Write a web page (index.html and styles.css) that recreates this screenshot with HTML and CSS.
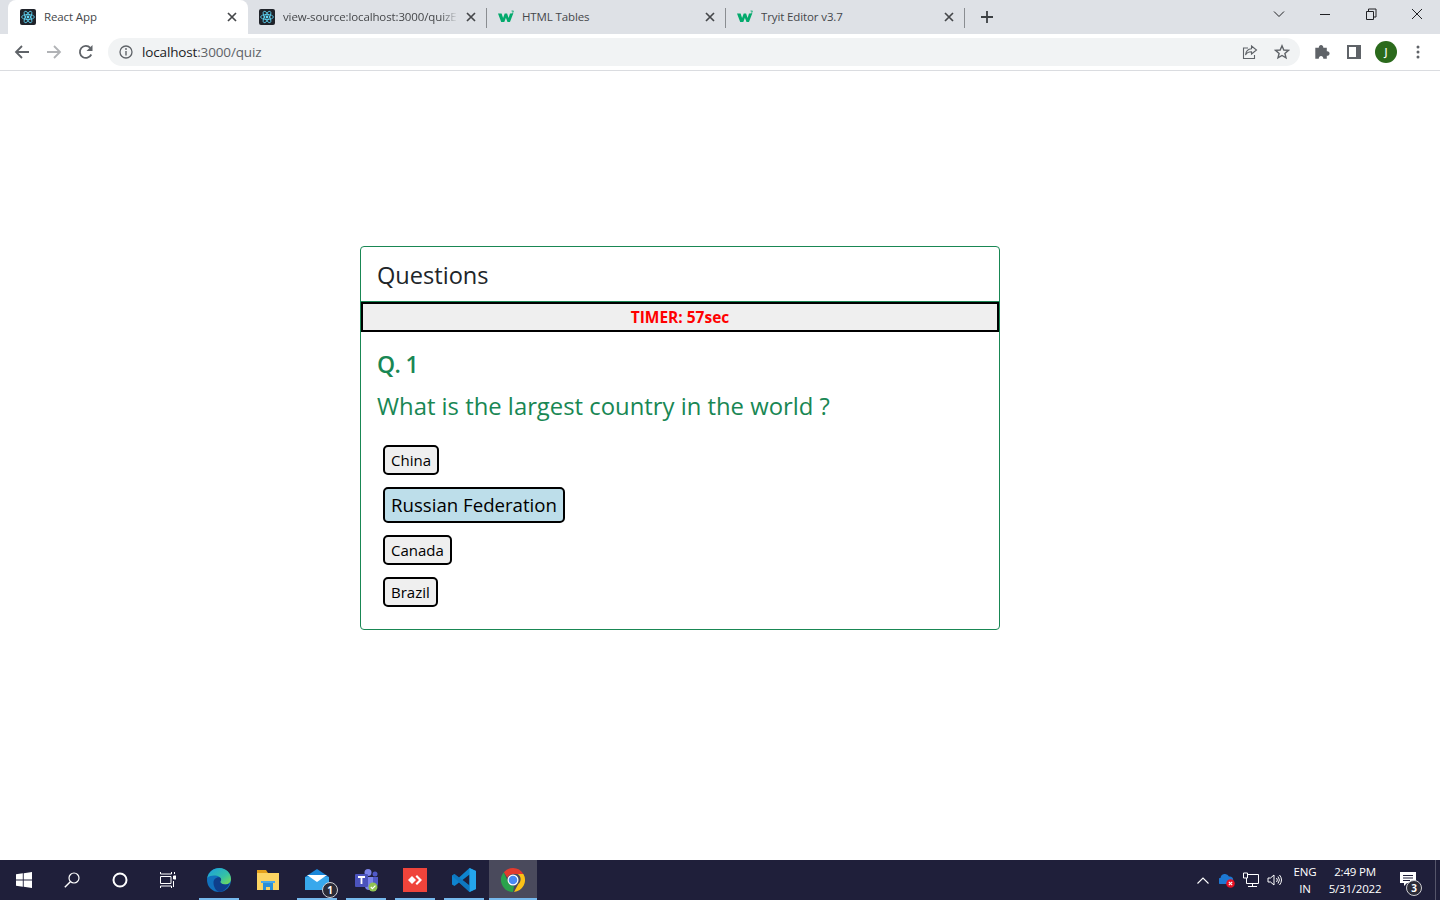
FILE: index.html
```html
<!DOCTYPE html>
<html lang="en">
<head>
<meta charset="utf-8">
<title>React App</title>
<link rel="stylesheet" href="styles.css">
</head>
<body>
<svg class="defs" width="0" height="0" aria-hidden="true">
  <defs>
    <symbol id="react" viewBox="0 0 16 16">
      <rect width="16" height="16" rx="2" fill="#20232a"/>
      <g fill="none" stroke="#61dafb" stroke-width=".8">
        <ellipse cx="8" cy="8" rx="6.4" ry="2.5"/>
        <ellipse cx="8" cy="8" rx="6.4" ry="2.5" transform="rotate(60 8 8)"/>
        <ellipse cx="8" cy="8" rx="6.4" ry="2.5" transform="rotate(120 8 8)"/>
      </g>
      <circle cx="8" cy="8" r="1.4" fill="#61dafb"/>
    </symbol>
    <symbol id="w3" viewBox="0 0 16 16">
      <path d="M0 4.500h3.600l1.500 4.500 1.600-4.500h2.400l1.500 4.500 1.400-4.500h3.200l-3.200 8.500H9.500L7.900 8.700 6.300 13H3.200z" fill="#04aa6d"/>
      <path d="M13.500 2h2l-.9 1.200c.8.200.8 1.700-1 1.700" fill="none" stroke="#04aa6d" stroke-width=".8"/>
    </symbol>
    <symbol id="x" viewBox="0 0 10 10">
      <path d="M1 1l8 8M9 1l-8 8" stroke="#45474a" stroke-width="1.700" fill="none"/>
    </symbol>
    <linearGradient id="edge-top" x1="0" y1="0" x2="1" y2="1">
      <stop offset="0" stop-color="#1b9de2"/>
      <stop offset=".6" stop-color="#35c1a5"/>
      <stop offset="1" stop-color="#7fe04c"/>
    </linearGradient>
  </defs>
</svg>

<header class="chrome">
  <div class="tabstrip">
    <div class="tab tab-active">
      <svg class="favicon"><use href="#react"/></svg>
      <span class="tab-title">React App</span>
      <svg class="tab-close"><use href="#x"/></svg>
    </div>
    <div class="tab tab-sep">
      <svg class="favicon"><use href="#react"/></svg>
      <span class="tab-title tab-fade">view-source:localhost:3000/quizE</span>
      <svg class="tab-close"><use href="#x"/></svg>
    </div>
    <div class="tab tab-sep">
      <svg class="favicon"><use href="#w3"/></svg>
      <span class="tab-title">HTML Tables</span>
      <svg class="tab-close"><use href="#x"/></svg>
    </div>
    <div class="tab tab-sep">
      <svg class="favicon"><use href="#w3"/></svg>
      <span class="tab-title">Tryit Editor v3.7</span>
      <svg class="tab-close"><use href="#x"/></svg>
    </div>
    <svg class="newtab" viewBox="0 0 12 12"><path d="M6 0v12M0 6h12" stroke="#3c4043" stroke-width="1.800"/></svg>
    <div class="winctl">
      <svg class="win-chevron" viewBox="0 0 12 12"><path d="M1 3.500l5 5 5-5" fill="none" stroke="#202124" stroke-width="1"/></svg>
      <svg class="win-btn" viewBox="0 0 46 12"><path d="M18 6.500h10" stroke="#202124" stroke-width="1"/></svg>
      <svg class="win-btn" viewBox="0 0 46 12"><path d="M18.500 3.500h7v8h-7zM20.500 3.500v-2.500h7.500v8h-2.500" fill="none" stroke="#202124" stroke-width="1"/></svg>
      <svg class="win-btn" viewBox="0 0 46 12"><path d="M18 1l10 10M28 1l-10 10" stroke="#202124" stroke-width="1"/></svg>
    </div>
  </div>
  <div class="toolbar">
    <svg class="tool-icon" viewBox="0 0 16 16"><path d="M15 8H2.500M8 2L2 8l6 6" fill="none" stroke="#5f6368" stroke-width="1.800"/></svg>
    <svg class="tool-icon" viewBox="0 0 16 16"><path d="M1 8h12.500M8 2l6 6-6 6" fill="none" stroke="#b1b3b6" stroke-width="1.800"/></svg>
    <svg class="tool-icon" viewBox="0 0 16 16"><path d="M13.300 10.500A6 6 0 1 1 12.300 3.800" fill="none" stroke="#5f6368" stroke-width="1.800"/><path d="M14.500 1v6h-6z" fill="#5f6368"/></svg>
    <div class="omnibox">
      <svg class="omni-info" viewBox="0 0 14 14"><circle cx="7" cy="7" r="6" fill="none" stroke="#5f6368" stroke-width="1.300"/><path d="M7 6v4.500" stroke="#5f6368" stroke-width="1.400"/><circle cx="7" cy="4" r=".9" fill="#5f6368"/></svg>
      <span class="url"><span class="url-host">localhost</span>:3000/quiz</span>
      <svg class="omni-share" viewBox="0 0 16 16"><path d="M9.500 2l5 4-5 4V7.700c-3 0-5 1-6 3.300.3-3.500 2.500-6 6-6.300z" fill="none" stroke="#5f6368" stroke-width="1.100"/><path d="M6 4H1.500v10.500h11V11" fill="none" stroke="#5f6368" stroke-width="1.100"/></svg>
      <svg class="omni-star" viewBox="0 0 16 16"><path d="M8 1.800l1.800 4.200 4.600.4-3.500 3 1.100 4.500L8 11.500l-4 2.400 1.100-4.500-3.500-3 4.600-.4z" fill="none" stroke="#5f6368" stroke-width="1.400"/></svg>
    </div>
    <svg class="ext-icon" viewBox="0 0 16 16"><path d="M.5 5H4a2.300 2.300 0 1 1 4.500 0H12v3.500a2.300 2.300 0 1 1 0 4.500V16H8.500a2.300 2.300 0 1 0-4.500 0H.5z" fill="#5f6368" transform="translate(.8 -1.200)"/></svg>
    <svg class="ext-icon" viewBox="0 0 16 16"><path d="M1 1h14v14H1z" fill="#5f6368"/><path d="M3 3h7v10H3z" fill="#fff"/></svg>
    <div class="avatar">J</div>
    <svg class="ext-icon" viewBox="0 0 16 16"><circle cx="8" cy="3" r="1.500" fill="#5f6368"/><circle cx="8" cy="8" r="1.500" fill="#5f6368"/><circle cx="8" cy="13" r="1.500" fill="#5f6368"/></svg>
  </div>
</header>

<main class="page">
  <section class="card">
    <div class="card-header">Questions</div>
    <div class="timer">TIMER: 57sec</div>
    <div class="card-body">
      <h3 class="q-num">Q. 1</h3>
      <p class="q-text">What is the largest country in the world ?</p>
      <div class="options">
        <button class="opt">China</button>
        <button class="opt opt-selected">Russian Federation</button>
        <button class="opt">Canada</button>
        <button class="opt">Brazil</button>
      </div>
    </div>
  </section>
</main>

<footer class="taskbar">
  <div class="tb-cell">
    <svg class="tb-sys" viewBox="0 0 16 16"><path d="M0 2.300l6.800-1v6.300H0zM7.700 1.200L16 0v7.600H7.700zM0 8.500h6.800v6.300L0 13.800zM7.700 8.500H16V16l-8.300-1.200z" fill="#fff"/></svg>
  </div>
  <div class="tb-cell">
    <svg class="tb-sys" viewBox="0 0 16 16"><circle cx="10" cy="6" r="5" fill="none" stroke="#fff" stroke-width="1.200"/><path d="M6.300 9.700L.8 15.300" stroke="#fff" stroke-width="1.400"/></svg>
  </div>
  <div class="tb-cell">
    <svg class="tb-sys" viewBox="0 0 16 16"><circle cx="8" cy="8" r="6.500" fill="none" stroke="#fff" stroke-width="2"/></svg>
  </div>
  <div class="tb-cell">
    <svg class="tb-sys" viewBox="0 0 16 16"><path d="M.5 0v2h11V0M.5 16v-2h11v2" fill="none" stroke="#fff" stroke-width="1"/><path d="M.5 4.500h10.500v7H.5z" fill="none" stroke="#fff" stroke-width="1"/><path d="M13.500 4h2.500v3h-2.500zM13.500 9v6M14.500 0v2" stroke="#fff" fill="#fff" stroke-width="1"/></svg>
  </div>
  <div class="tb-apps">
    <div class="tb-app tb-open">
      <svg class="tb-icon" viewBox="0 0 24 24"><circle cx="12" cy="12" r="12" fill="#1171bd"/><path d="M.3 10C1.500 4 6.500 0 12.500 0 19 0 24 5 24 11c0 3.500-3 5.500-6 5.500-2.500 0-4.500-1-5-2.500 1.500-1 1.500-3.500-.5-5C9.500 7 3 7 .3 10z" fill="url(#edge-top)"/><path d="M6.500 14.500c0-3 2.500-5.500 6-5.300 2 .8 2.200 3.300.7 4.500.8 2.500 5 3.800 9.300 1.800-1.800 4.500-6 8.300-10.500 8.500-3.500-1.500-5.500-5.500-5.500-9.500z" fill="#0f3f8c"/></svg>
    </div>
    <div class="tb-app">
      <svg class="tb-icon" viewBox="0 0 24 24"><path d="M1 2h9l2 3H1z" fill="#e4a11b"/><path d="M1 5h22v17H1z" fill="#fcd462"/><path d="M7 22v-7h10v7h-3v-3h-4v3z" fill="#2a8fd8"/><path d="M5 13h14v2H5z" fill="#4aa9e9"/></svg>
    </div>
    <div class="tb-app tb-open">
      <svg class="tb-icon" viewBox="0 0 24 24"><path d="M0 9l12-8 12 8v13H0z" fill="#1a86d8"/><path d="M0 9h24v13H0z" fill="#38a8ec"/><path d="M2 7h20l-10 7z" fill="#fff"/></svg>
      <span class="tb-badge">1</span>
    </div>
    <div class="tb-app tb-open">
      <svg class="tb-icon" viewBox="0 0 24 24"><circle cx="14" cy="4.500" r="3.500" fill="#7b83eb"/><circle cx="21" cy="6" r="2.500" fill="#5059c9"/><path d="M11 9h8v9a4 4 0 0 1-8 0z" fill="#7b83eb"/><path d="M19 9h5v7c0 2-2 3-5 2.500z" fill="#5059c9"/><rect x="1" y="6" width="13" height="13" rx="1" fill="#4b53bc"/><path d="M4 9h7M7.500 9v7" stroke="#fff" stroke-width="1.800"/><circle cx="19" cy="19" r="4.500" fill="#92c353"/><path d="M16.800 19l1.600 1.600 3-3" stroke="#fff" stroke-width="1.200" fill="none"/></svg>
    </div>
    <div class="tb-app tb-open">
      <svg class="tb-icon" viewBox="0 0 24 24"><rect width="24" height="24" fill="#ef443b"/><path d="M9 8l4 4-4 4-4-4z" fill="#fff"/><path d="M14 7l5 5-5 5-1.500-1.500L16 12l-3.500-3.500z" fill="#fff"/></svg>
    </div>
    <div class="tb-app tb-open">
      <svg class="tb-icon" viewBox="0 0 24 24"><path d="M17.500 0L24 3v18l-6.500 3L7 14.500 2.500 18 0 16.500V7.500L2.500 6 7 9.500zM17.500 6.500L10.500 12l7 5.500z" fill="#0e84cf"/><path d="M17.500 0L24 3v18l-6.500 3z" fill="#24a5ec"/><path d="M0 7.500L2.500 6l15 11.500V24z" fill="#0f6fb5" opacity=".6"/></svg>
    </div>
    <div class="tb-app tb-open tb-current">
      <svg class="tb-icon" viewBox="0 0 24 24"><path d="M12 0a12 12 0 0 1 10.400 6H12a6 6 0 0 0-5.600 3.800L2.800 4.300A12 12 0 0 1 12 0z" fill="#e33b2e"/><path d="M22.400 6A12 12 0 0 1 13 24l4.300-8a6 6 0 0 0-.8-10z" fill="#fbc116"/><path d="M2.800 4.300L7.500 15a6 6 0 0 0 5.500 3l-1 6A12 12 0 0 1 2.800 4.300z" fill="#2aa24c"/><circle cx="12" cy="12" r="5.500" fill="#fff"/><circle cx="12" cy="12" r="4.300" fill="#4a8af4"/></svg>
    </div>
  </div>
  <div class="tray">
    <svg class="tray-chevron" viewBox="0 0 12 7"><path d="M.5 6.500L6 1l5.500 5.500" fill="none" stroke="#fff" stroke-width="1.100"/></svg>
    <svg class="tray-icon" viewBox="0 0 16 16"><path d="M1 12a3 3 0 0 1 .5-6 4.500 4.500 0 0 1 8.500-1.500A3.500 3.500 0 0 1 14 9v3z" fill="#1d78d2"/><circle cx="11.500" cy="11.500" r="4.300" fill="#e81123"/><path d="M9.800 9.800l3.400 3.400M13.200 9.800l-3.400 3.400" stroke="#fff" stroke-width="1.100"/></svg>
    <svg class="tray-icon" viewBox="0 0 16 16"><path d="M3.500 2.500h12v9h-12zM9.500 11.500v3M5 14.500h9" fill="none" stroke="#fff" stroke-width="1"/><path d="M.5 1h4v5h-4z" fill="#1f1f3a" stroke="#fff" stroke-width="1"/></svg>
    <svg class="tray-icon" viewBox="0 0 16 16"><path d="M1 6v4h2.500L7 13V3L3.500 6z" fill="none" stroke="#fff" stroke-width="1"/><path d="M9.500 6a3 3 0 0 1 0 4M11 4.500a5.500 5.500 0 0 1 0 7M12.500 3a8 8 0 0 1 0 10" fill="none" stroke="#fff" stroke-width="1"/></svg>
    <div class="tray-lang"><span>ENG</span><span>IN</span></div>
    <div class="tray-clock"><span>2:49 PM</span><span>5/31/2022</span></div>
    <div class="tray-note">
      <svg class="tray-note-icon" viewBox="0 0 16 16"><path d="M0 1h16v11H7l-3 3v-3H0z" fill="#fff"/><path d="M3 4.500h10M3 7h10M3 9.500h7" stroke="#1f1f3a" stroke-width="1"/></svg>
      <span class="tray-badge">3</span>
    </div>
    <div class="tray-desktop"></div>
  </div>
</footer>
</body>
</html>
```
FILE: styles.css
```css
* { box-sizing: border-box; }
html, body { height: 100%; }
body {
  margin: 0;
  display: flex;
  flex-direction: column;
  height: 900px;
  overflow: hidden;
  background: #fff;
  font-family: "Open Sans", "Noto Sans", sans-serif;
  color: #212529;
}
.defs { position: absolute; }

/* Browser chrome */
.chrome { flex: none; height: 71px; border-bottom: 1px solid #dadce0; }
.tabstrip {
  display: flex;
  align-items: center;
  height: 34px;
  padding-left: 8px;
  background: #dee1e6;
}
.tab {
  position: relative;
  display: flex;
  align-items: center;
  flex: none;
  width: 239px;
  height: 34px;
  padding: 0 8px 0 12px;
}
.tab-active {
  width: 240px;
  margin-right: -1px;
  padding-right: 9px;
  background: #fff;
  border-radius: 8px 8px 0 0;
}
.tab-sep::after {
  content: "";
  position: absolute;
  right: -1px;
  top: 8px;
  width: 1px;
  height: 20px;
  background: #8a8d91;
}
.favicon { flex: none; width: 16px; height: 16px; }
.tab-title {
  flex: 1;
  min-width: 0;
  margin-top: -1px;
  margin-left: 8px;
  overflow: hidden;
  white-space: nowrap;
  font-size: 11.500px;
  line-height: 16px;
  letter-spacing: -.12px;
  color: #45474a;
}
.tab-fade {
  -webkit-mask-image: linear-gradient(to right, #000 90%, transparent 100%);
  mask-image: linear-gradient(to right, #000 90%, transparent 100%);
}
.tab-close { flex: none; width: 10px; height: 10px; margin: 0 2px 0 8px; }
.newtab { flex: none; width: 12px; height: 12px; margin-left: 17px; }
.winctl { display: flex; align-items: center; margin-left: auto; height: 100%; }
.win-chevron { width: 12px; height: 12px; margin: -6px 17px 0 0; }
.win-btn { width: 46px; height: 12px; margin-top: -6px; }

.toolbar {
  display: flex;
  align-items: center;
  height: 36px;
  padding-left: 14px;
  background: #fff;
}
.tool-icon { flex: none; width: 16px; height: 16px; margin-right: 16px; }
.omnibox {
  display: flex;
  align-items: center;
  flex: none;
  width: 1192px;
  height: 28px;
  margin-left: -2px;
  margin-right: -6px;
  padding: 0 10px 0 11px;
  border-radius: 14px;
  background: #f1f3f4;
}
.omni-info { flex: none; width: 14px; height: 14px; }
.url { margin-left: 9px; font-size: 13.500px; letter-spacing: -.15px; color: #5f6368; }
.url-host { color: #202124; }
.omni-share { flex: none; width: 16px; height: 16px; margin-left: auto; }
.omni-star { flex: none; width: 16px; height: 16px; margin-left: 16px; }
.ext-icon { flex: none; width: 16px; height: 16px; margin-left: 16px; }
.omnibox + .ext-icon { margin-left: 20px; }
.avatar {
  flex: none;
  display: flex;
  align-items: center;
  justify-content: center;
  width: 22px;
  height: 22px;
  margin-left: 13px;
  margin-right: -3px;
  border-radius: 50%;
  background: #2b6a1c;
  color: #fff;
  font-size: 10px;
  font-weight: 600;
}

/* Page */
.page { flex: 1; padding: 175px 80px 0 0; }
.card {
  width: 640px;
  margin: 0 auto;
  border: 1px solid #198754;
  border-radius: 4px;
}
.card-header {
  height: 55px;
  padding: 11px 16px 0;
  border-bottom: 1px solid #198754;
  font-size: 23.600px;
  line-height: 34px;
  color: #212529;
}
.timer {
  height: 30px;
  border: 2px solid #000;
  background: #efefef;
  color: #f00;
  font-size: 15.500px;
  font-weight: 700;
  line-height: 27px;
  text-align: center;
}
.card-body { padding: 15px 16px 16px; }
.q-num {
  margin: 0;
  font-size: 23px;
  font-weight: 600;
  letter-spacing: -.6px;
  line-height: 34px;
  color: #198754;
}
.q-text {
  margin: 8px 0 0;
  font-size: 23.850px;
  line-height: 34px;
  color: #198754;
}
.options {
  display: flex;
  flex-direction: column;
  align-items: flex-start;
  gap: 12px;
  margin-top: 22px;
  padding: 0 6px 6px;
}
.opt {
  padding: 1px 6px;
  border: 2px solid #000;
  border-radius: 5px;
  background: #efefef;
  color: #000;
  font-family: inherit;
  font-size: 15px;
  line-height: 24px;
}
.opt-selected { background: #bddeea; font-size: 18.650px; line-height: 30px; }

/* Taskbar */
.taskbar {
  flex: none;
  display: flex;
  align-items: center;
  height: 40px;
  background: #1f1f3a;
  color: #fff;
}
.tb-cell {
  flex: none;
  display: flex;
  align-items: center;
  justify-content: center;
  width: 48px;
  height: 40px;
}
.tb-sys { width: 16px; height: 16px; }
.tb-apps { display: flex; gap: 1px; margin-left: 3px; height: 40px; }
.tb-app {
  position: relative;
  display: flex;
  align-items: center;
  justify-content: center;
  flex: none;
  width: 48px;
  height: 40px;
}
.tb-icon { width: 24px; height: 24px; }
.tb-open::after {
  content: "";
  position: absolute;
  left: 4px;
  right: 4px;
  bottom: 0;
  height: 2px;
  background: #76b9ed;
}
.tb-current { background: #4a4a5c; }
.tb-current::after { left: 0; right: 0; }
.tb-badge, .tray-badge {
  position: absolute;
  display: flex;
  align-items: center;
  justify-content: center;
  width: 16px;
  height: 16px;
  border: 1px solid #cfcfd4;
  border-radius: 50%;
  background: #2c2c38;
  color: #fff;
  font-size: 10px;
  font-weight: 700;
}
.tb-badge { right: 3px; bottom: 2px; }
.tray { display: flex; align-items: center; margin-left: auto; height: 100%; }
.tray-chevron { width: 12px; height: 7px; margin-right: 10px; }
.tray-icon { width: 16px; height: 16px; margin-right: 8px; }
.tray-lang, .tray-clock {
  display: flex;
  flex-direction: column;
  align-items: center;
  font-size: 11.500px;
  line-height: 17px;
  letter-spacing: -.2px;
}
.tray-lang { width: 30px; margin-left: -1px; }
.tray-clock { width: 64px; margin-left: 3px; }
.tray-note { position: relative; width: 32px; height: 40px; margin-left: 3px; }
.tray-note-icon { position: absolute; left: 10px; top: 11px; width: 16px; height: 16px; }
.tray-badge { left: 16px; bottom: 4px; }
.tray-desktop { width: 5px; height: 40px; margin-left: 13px; border-left: 1px solid #55556a; }
```
